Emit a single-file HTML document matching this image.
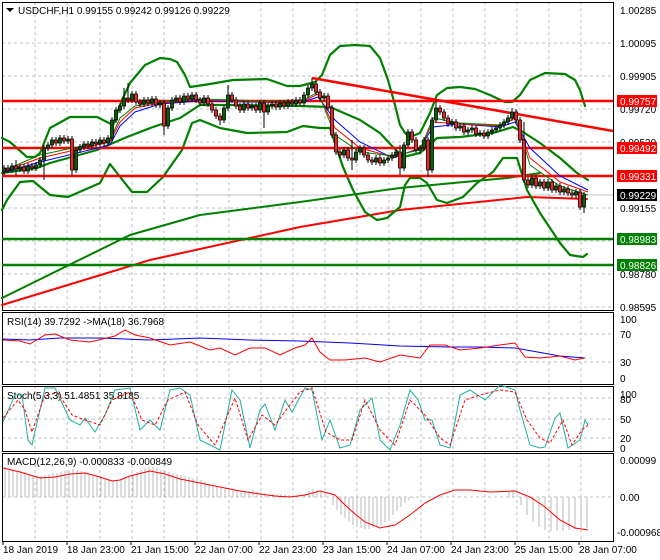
<!DOCTYPE html>
<html><head><meta charset="utf-8"><style>
body{margin:0;background:#fff;width:660px;height:560px;overflow:hidden;font-family:"Liberation Sans",sans-serif}
svg{display:block}
text{font-family:"Liberation Sans",sans-serif;font-size:10px}
</style></head><body>
<svg width="660" height="560" viewBox="0 0 660 560">
<rect width="660" height="560" fill="#fff"/>
<g stroke="#c0c0c0" stroke-dasharray="3,3" stroke-width="1">
<path d="M35 2V541M67 2V541M100 2V541M132 2V541M164 2V541M197 2V541M229 2V541M261 2V541M293 2V541M325 2V541M357 2V541M389 2V541M421 2V541M453 2V541M485 2V541M517 2V541M549 2V541M581 2V541"/>
<path d="M2 43H613M2 76H613M2 109H613M2 142H613M2 175H613M2 208H613M2 241H613M2 274H613M2 307H613"/>
<path d="M2 334H613M2 362H613M2 398H613M2 419H613M2 438H613M2 497H613"/>
</g>
<path d="M2 195H613" stroke="#c0c0c0"/>
<g fill="none" stroke="#000" stroke-width="1">
<rect x="2.5" y="2.5" width="611" height="308"/>
<rect x="2.5" y="312.5" width="611" height="72"/>
<rect x="2.5" y="386.5" width="611" height="65"/>
<rect x="2.5" y="453.5" width="611" height="88"/>
</g>
<g fill="none" stroke-linejoin="round" stroke-linecap="round">
<polyline stroke="#008000" stroke-width="2" points="2,298 130,235 200,215 300,202 400,188 507,178 540,173"/>
<polyline stroke="#ff0000" stroke-width="2" points="2,305 150,260 300,227 400,210 527,197 587,199"/>
<g stroke="#008000" stroke-width="2.2">
<polyline points="2,138 10,142 27,157 35,157 40,153 50,128 70,117 97,117 107,122 113,125 122,100 130,83 145,65 160,58 170,59 177,62 185,75 190,87 210,84 233,80 267,79 287,86 300,86 315,82 322,75 330,55 340,46 355,45 370,46 380,58 388,80 395,105 400,125 405,133 410,137 420,133 430,113 437,95 447,88 460,87 475,89 490,95 505,102 512,102 520,95 530,80 545,73 565,74 575,80 580,90 585,106"/>
<polyline points="2,210 7,200 20,182 33,181 50,195 68,197 100,183 110,164 117,173 132,192 147,192 163,177 182,150 192,123 200,120 220,128 247,133 287,132 303,126 320,128 330,128 343,167 353,190 365,212 377,220 387,218 400,207 405,185 410,178 420,178 427,183 437,200 447,203 463,197 477,183 493,172 503,158 517,158 527,190 540,213 560,243 570,255 583,257 587,254"/>
<polyline points="2,173 37,168 50,163 97,150 113,143 127,137 153,127 180,118 200,105 233,105 300,106 330,107 360,120 380,133 393,147 403,157 420,153 437,138 460,137 493,133 513,127 523,132 540,143 560,158 577,173 588,180"/>
</g>
</g>
<g stroke="#ff0000" stroke-width="2.5">
<path d="M2 101H613M2 148H613M2 176H613"/>
<path d="M312 78L613 131"/>
</g>
<g stroke="#008000" stroke-width="2.5"><path d="M2 239H613M2 265H613"/></g>
<g fill="none" stroke-width="1">
<polyline stroke="#0000ff" points="5,172 40,162 110,145 120,126 135,112 160,104 200,101 300,103 318,97 335,120 360,142 393,158 420,148 433,127 460,124 500,127 515,122 530,148 560,176 588,190"/>
<polyline stroke="#ff0000" points="5,171 40,158 110,142 120,122 135,108 160,103 200,100 300,103 318,94 335,128 360,148 393,157 420,149 433,122 460,124 500,126 515,118 530,158 560,182 588,192"/>
<polyline stroke="#008000" points="5,170 40,155 110,140 120,118 135,106 160,102 200,99 300,102 318,92 335,135 360,152 393,156 420,150 433,118 460,123 500,125 515,115 530,165 560,186 588,195"/>
</g>
<!-- wicks -->
<path stroke="#000" stroke-width="1" fill="none" d="M4 165V175M8 165V173M12 163V173M16 160V175M20 164V172M24 164V174M28 163V174M32 163V171M36 162V171M40 157V168M44 145V180M48 142V151M52 137V148M56 137V146M60 135V146M64 135V144M68 136V144M72 136V175M76 147V173M80 144V153M84 141V150M88 141V149M92 139V149M96 139V147M100 137V147M104 137V146M108 135V146M112 117V141M116 107V123M120 103V113M124 88V109M128 83V103M132 91V103M136 91V105M140 99V107M144 97V107M148 97V106M152 96V106M156 96V108M160 100V108M164 100V135M168 105V129M172 97V111M176 95V103M180 95V105M184 93V105M188 93V102M192 92V102M196 92V103M200 97V106M204 95V106M208 95V107M212 101V113M216 107V119M220 113V125M224 105V123M228 85V111M232 92V103M236 97V109M240 103V113M244 101V113M248 101V111M252 103V111M256 103V113M260 100V113M264 100V128M268 103V115M272 101V109M276 101V110M280 100V110M284 100V109M288 99V109M292 99V107M296 97V107M300 97V106M304 92V106M308 85V98M312 78V91M316 81V95M320 89V101M324 93V101M328 93V111M332 105V138M336 132V155M340 149V158M344 147V158M348 147V161M352 140V170M356 149V163M360 145V155M364 145V158M368 152V163M372 157V165M376 155V165M380 155V166M384 157V166M388 155V163M392 152V161M396 149V158M400 145V175M404 142V171M408 129V148M412 129V143M416 137V153M420 145V153M424 137V151M428 137V177M432 117V173M436 100V123M440 105V115M444 109V121M448 115V127M452 119V127M456 119V131M460 123V131M464 123V135M468 127V135M472 125V133M476 125V137M480 130V137M484 130V139M488 129V139M492 127V135M496 125V133M500 122V131M504 119V128M508 115V125M512 108V121M516 109V123M520 117V143M524 122V183M528 177V188M532 175V188M536 175V189M540 179V189M544 179V191M548 179V191M552 179V193M556 183V193M560 183V195M564 186V195M568 186V196M572 190V198M576 189V198M580 189V210M584 192V213"/>
<!-- bull bodies -->
<path fill="#006400" stroke="#000" stroke-width="0.8" d="M2.5 168h3v4h-3zM10.5 166h3v4h-3zM18.5 167h3v2h-3zM26.5 166h3v5h-3zM34.5 165h3v3h-3zM38.5 160h3v5h-3zM42.5 148h3v12h-3zM46.5 145h3v3h-3zM50.5 140h3v5h-3zM58.5 138h3v5h-3zM66.5 139h3v2h-3zM74.5 150h3v20h-3zM78.5 147h3v3h-3zM82.5 144h3v3h-3zM90.5 142h3v4h-3zM98.5 140h3v4h-3zM106.5 138h3v5h-3zM110.5 120h3v18h-3zM114.5 110h3v10h-3zM118.5 106h3v4h-3zM122.5 98h3v8h-3zM130.5 94h3v6h-3zM142.5 100h3v4h-3zM150.5 99h3v4h-3zM158.5 103h3v2h-3zM166.5 108h3v18h-3zM170.5 100h3v8h-3zM174.5 98h3v2h-3zM182.5 96h3v6h-3zM190.5 95h3v4h-3zM202.5 98h3v5h-3zM222.5 108h3v12h-3zM226.5 95h3v13h-3zM242.5 104h3v6h-3zM250.5 106h3v2h-3zM258.5 103h3v7h-3zM266.5 106h3v6h-3zM270.5 104h3v2h-3zM278.5 103h3v4h-3zM286.5 102h3v4h-3zM294.5 100h3v4h-3zM302.5 95h3v8h-3zM306.5 88h3v7h-3zM310.5 84h3v4h-3zM322.5 96h3v2h-3zM342.5 150h3v5h-3zM354.5 152h3v8h-3zM358.5 148h3v4h-3zM374.5 158h3v4h-3zM382.5 160h3v3h-3zM386.5 158h3v2h-3zM390.5 155h3v3h-3zM394.5 152h3v3h-3zM402.5 145h3v23h-3zM406.5 132h3v13h-3zM418.5 148h3v2h-3zM422.5 140h3v8h-3zM430.5 120h3v50h-3zM434.5 108h3v12h-3zM450.5 122h3v2h-3zM458.5 126h3v2h-3zM466.5 130h3v2h-3zM470.5 128h3v2h-3zM478.5 133h3v1h-3zM486.5 132h3v4h-3zM490.5 130h3v2h-3zM494.5 128h3v2h-3zM498.5 125h3v3h-3zM502.5 122h3v3h-3zM506.5 118h3v4h-3zM510.5 112h3v6h-3zM530.5 178h3v7h-3zM538.5 182h3v4h-3zM546.5 182h3v6h-3zM554.5 186h3v4h-3zM562.5 189h3v3h-3zM574.5 192h3v3h-3zM582.5 195h3v12h-3z"/>
<!-- bear bodies -->
<path fill="#ff2020" stroke="#000" stroke-width="0.8" d="M6.5 168h3v2h-3zM14.5 166h3v3h-3zM22.5 167h3v4h-3zM30.5 166h3v2h-3zM54.5 140h3v3h-3zM62.5 138h3v3h-3zM70.5 139h3v31h-3zM86.5 144h3v2h-3zM94.5 142h3v2h-3zM102.5 140h3v3h-3zM126.5 98h3v2h-3zM134.5 94h3v8h-3zM138.5 102h3v2h-3zM146.5 100h3v3h-3zM154.5 99h3v6h-3zM162.5 103h3v23h-3zM178.5 98h3v4h-3zM186.5 96h3v3h-3zM194.5 95h3v5h-3zM198.5 100h3v3h-3zM206.5 98h3v6h-3zM210.5 104h3v6h-3zM214.5 110h3v6h-3zM218.5 116h3v4h-3zM230.5 95h3v5h-3zM234.5 100h3v6h-3zM238.5 106h3v4h-3zM246.5 104h3v4h-3zM254.5 106h3v4h-3zM262.5 103h3v9h-3zM274.5 104h3v3h-3zM282.5 103h3v3h-3zM290.5 102h3v2h-3zM298.5 100h3v3h-3zM314.5 84h3v8h-3zM318.5 92h3v6h-3zM326.5 96h3v12h-3zM330.5 108h3v27h-3zM334.5 135h3v17h-3zM338.5 152h3v3h-3zM346.5 150h3v8h-3zM350.5 158h3v2h-3zM362.5 148h3v7h-3zM366.5 155h3v5h-3zM370.5 160h3v2h-3zM378.5 158h3v5h-3zM398.5 152h3v16h-3zM410.5 132h3v8h-3zM414.5 140h3v10h-3zM426.5 140h3v30h-3zM438.5 108h3v4h-3zM442.5 112h3v6h-3zM446.5 118h3v6h-3zM454.5 122h3v6h-3zM462.5 126h3v6h-3zM474.5 128h3v6h-3zM482.5 133h3v3h-3zM514.5 112h3v8h-3zM518.5 120h3v20h-3zM522.5 140h3v40h-3zM526.5 180h3v5h-3zM534.5 178h3v8h-3zM542.5 182h3v6h-3zM550.5 182h3v8h-3zM558.5 186h3v6h-3zM566.5 189h3v4h-3zM570.5 193h3v2h-3zM578.5 192h3v15h-3z"/>
<g font-size="10">
<text x="620" y="14">1.00285</text>
<text x="620" y="47">1.00095</text>
<text x="620" y="80">0.99905</text>
<text x="620" y="113">0.99720</text>
<text x="620" y="146">0.99530</text>
<text x="620" y="212">0.99155</text>
<text x="620" y="278">0.98780</text>
<text x="620" y="311">0.98595</text>
</g>
<rect x="617" y="95" width="40" height="12" fill="#ff0000"/><text x="620" y="105" fill="#fff">0.99757</text>
<rect x="617" y="142" width="40" height="12" fill="#ff0000"/><text x="620" y="152" fill="#fff">0.99492</text>
<rect x="617" y="170" width="40" height="12" fill="#ff0000"/><text x="620" y="180" fill="#fff">0.99331</text>
<rect x="617" y="189" width="40" height="12" fill="#000"/><text x="620" y="199" fill="#fff">0.99229</text>
<rect x="617" y="233" width="40" height="12" fill="#008000"/><text x="620" y="243" fill="#fff">0.98983</text>
<rect x="617" y="259" width="40" height="12" fill="#008000"/><text x="620" y="269" fill="#fff">0.98826</text>
<path d="M6 8h8l-4 4z" fill="#000"/>
<text x="18" y="14">USDCHF,H1  0.99155 0.99242 0.99126 0.99229</text>
<text x="7" y="325">RSI(14) 39.7292  -&gt;MA(18) 36.7968</text>
<polyline fill="none" stroke="#0000ff" stroke-width="1" points="3,339 30,340 60,338 100,338 150,340 200,338 250,340 300,341 350,343 400,346 450,347 480,347 515,348 560,356 585,358"/>
<polyline fill="none" stroke="#ff0000" stroke-width="1" points="3,340 20,341 30,344 45,335 55,334 70,340 90,342 115,336 125,330 135,335 150,338 170,345 190,342 210,350 220,348 235,355 250,348 265,348 280,355 295,348 305,345 312,338 320,352 330,360 345,360 365,358 380,362 400,355 420,358 430,345 445,345 460,350 480,348 500,345 515,343 525,357 540,358 560,356 575,360 585,358"/>
<g font-size="10"><text x="620" y="323">100</text><text x="620" y="338">70</text><text x="620" y="366">30</text><text x="620" y="382">0</text></g>
<text x="7" y="399">Stoch(5,3,3) 51.4851 35.8185</text>
<polyline fill="none" stroke="#20b0a0" stroke-width="1" points="3,422 15,395 22,395 28,440 32,445 45,388 55,388 70,420 80,425 85,418 95,432 105,415 115,390 130,388 140,430 150,420 160,430 170,390 180,388 190,395 200,440 220,450 232,390 240,400 250,448 260,410 265,404 275,430 285,400 292,412 305,388 312,390 322,440 330,420 340,448 350,445 360,410 372,398 380,440 390,450 400,425 410,390 418,400 425,420 432,420 440,445 450,448 460,395 470,390 485,400 500,385 515,390 520,410 530,445 540,448 545,447 555,418 560,413 568,448 580,440 585,420 588,425"/>
<polyline fill="none" stroke="#ff0000" stroke-width="1" stroke-dasharray="3,2" points="3,418 18,400 25,410 32,432 45,395 58,393 72,415 85,420 100,425 112,400 130,392 142,420 155,425 168,400 185,392 198,425 215,445 235,398 248,440 262,415 275,425 290,405 300,392 312,388 326,432 340,440 352,440 365,400 380,430 395,445 410,400 425,415 440,438 450,445 465,400 480,395 500,390 515,392 527,420 540,438 550,443 563,420 572,445 582,430 588,425"/>
<g font-size="10"><text x="620" y="398">100</text><text x="620" y="403">80</text><text x="620" y="423">50</text><text x="620" y="442">20</text><text x="620" y="452">0</text></g>
<g stroke="#b8b8b8" stroke-width="1">
<path d="M5 497V467M9 497V469M13 497V470M17 497V471M21 497V471M25 497V472M29 497V474M33 497V475M37 497V476M41 497V476M45 497V475M49 497V474M53 497V473M57 497V473M61 497V472M65 497V471M69 497V470M73 497V469M77 497V470M81 497V471M85 497V472M89 497V474M93 497V475M97 497V476M101 497V478M105 497V479M109 497V480M113 497V481M117 497V481M121 497V480M125 497V478M129 497V476M133 497V474M137 497V472M141 497V470M145 497V468M149 497V467M153 497V467M157 497V468M161 497V470M165 497V471M169 497V472M173 497V473M177 497V474M181 497V475M185 497V476M189 497V477M193 497V478M197 497V479M201 497V480M205 497V482M209 497V484M213 497V486M217 497V487M221 497V488M225 497V488M229 497V489M233 497V490M237 497V491M241 497V492M245 497V492M249 497V491M253 497V490M257 497V491M261 497V492M265 497V493M269 497V494M273 497V494M277 497V494M281 497V494M285 497V494M289 497V495M293 497V496M297 497V497M301 497V496M305 497V494M309 497V491M313 497V489M317 497V490M321 497V491M325 497V492"/>
<path d="M333 497V505M337 497V510M341 497V515M345 497V518M349 497V522M353 497V525M357 497V527M361 497V528M365 497V529M369 497V529M373 497V528M377 497V527M381 497V525M385 497V522M389 497V519M393 497V515M397 497V511M401 497V507M405 497V503M409 497V500M413 497V498"/>
<path d="M509 497V492M513 497V490M521 497V505M527 497V515M533 497V522M539 497V527M545 497V530M551 497V531M557 497V531M563 497V531M569 497V530M575 497V529M581 497V528M587 497V528"/>
</g>
<polyline fill="none" stroke="#ff0000" stroke-width="1" points="3,468 20,472 40,478 55,477 70,474 85,473 100,477 112,481 120,480 130,476 150,471 165,474 180,479 200,483 220,487 240,491 260,494 275,496 290,497 305,495 320,491 335,495 345,505 355,514 365,522 380,528 395,525 410,515 425,503 440,495 455,490 470,490 490,492 515,491 530,497 545,507 560,520 575,528 588,530"/>
<text x="7" y="465">MACD(12,26,9) -0.000833 -0.000849</text>
<g font-size="10"><text x="620" y="464">0.00099</text><text x="620" y="501">0.00</text><text x="617" y="536">-0.000968</text></g>
<g stroke="#000"><path d="M3 541v4M67 541v4M131 541v4M195 541v4M259 541v4M323 541v4M387 541v4M451 541v4M515 541v4M579 541v4"/></g>
<g font-size="10">
<text x="3" y="553">18 Jan 2019</text><text x="67" y="553">18 Jan 23:00</text><text x="131" y="553">21 Jan 15:00</text><text x="195" y="553">22 Jan 07:00</text><text x="259" y="553">22 Jan 23:00</text><text x="323" y="553">23 Jan 15:00</text><text x="387" y="553">24 Jan 07:00</text><text x="451" y="553">24 Jan 23:00</text><text x="515" y="553">25 Jan 15:00</text><text x="579" y="553">28 Jan 07:00</text>
</g>
</svg>
</body></html>
